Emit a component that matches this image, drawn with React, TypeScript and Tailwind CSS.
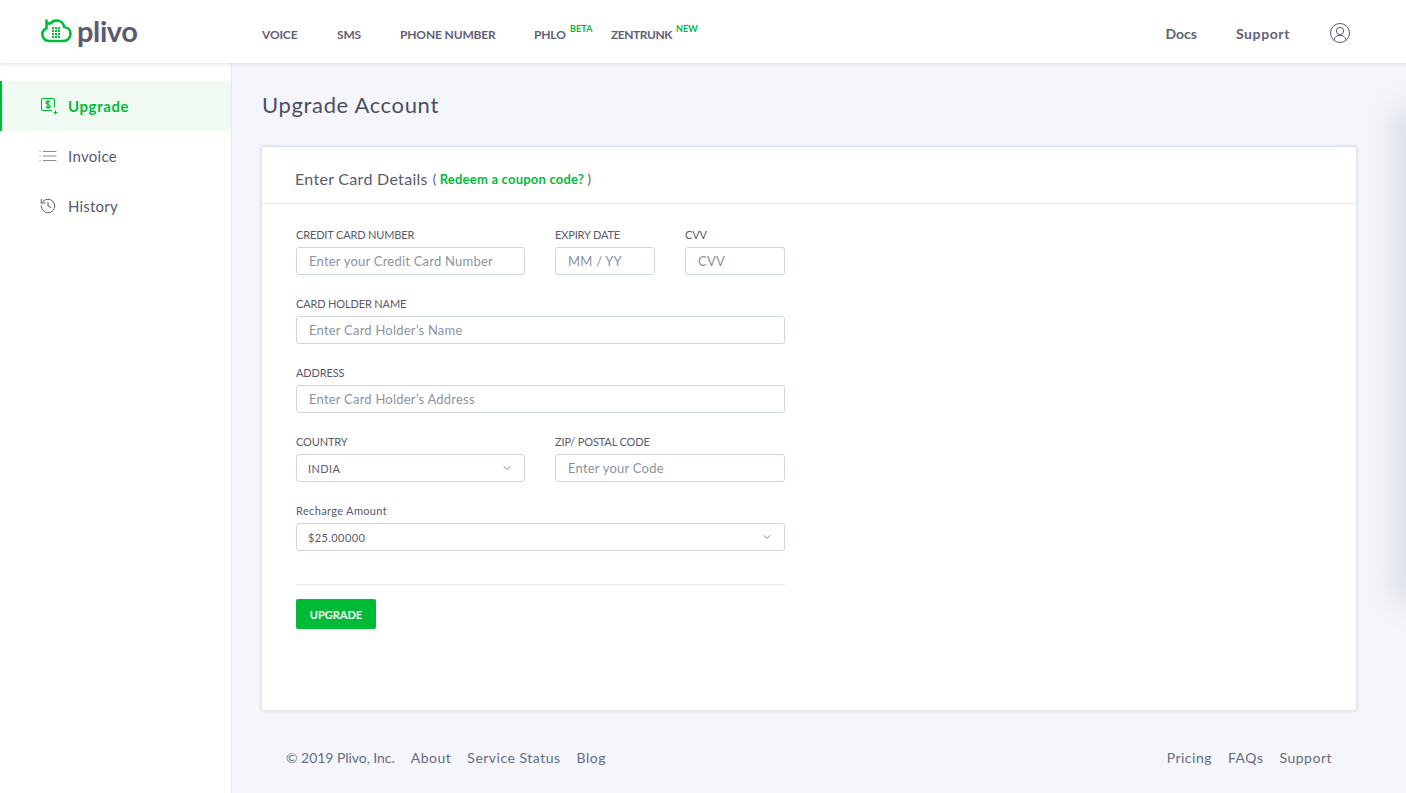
import { ChevronDown, History } from "lucide-react";

const font = "font-['Lato','Liberation_Sans',sans-serif]";
const green = "#00bb38";
const labelCls = "block h-[19px] text-[11px] leading-[14px] text-[#585a6e]";
const inputCls =
  "block h-[28px] w-full rounded-[3px] border border-[#cfd6de] bg-white px-3 text-[13px] tracking-[0.22px] text-[#585a6e] placeholder:text-[#8d939e] outline-none";

const Field = ({ label, placeholder, className = "" }: { label: string; placeholder: string; className?: string }) => (
  <div className={className}>
    <label className={`${labelCls} tracking-[-0.15px]`}>{label}</label>
    <input className={inputCls} placeholder={placeholder} />
  </div>
);

const SelectField = ({ label, value, labelClass, className = "" }: { label: string; value: string; labelClass: string; className?: string }) => (
  <div className={className}>
    <label className={`${labelCls} ${labelClass}`}>{label}</label>
    <button className="flex h-[28px] w-full items-center justify-between rounded-[3px] border border-[#cfd6de] bg-white pl-[11px] pr-[11px] text-[11px] tracking-[0.4px] text-[#585a6e]">
      <span className="pt-[3px]">{value}</span>
      <ChevronDown className="h-[12px] w-[12px] text-[#585a6e]" strokeWidth={1.5} />
    </button>
  </div>
);

const Logo = () => (
  <svg width="31" height="25" viewBox="0 0 31 25" fill="none">
    <path
      d="M5.500 9V1.500M5.500 4.500h4C11 2.600 13 1.500 15.500 1.500c4 0 7 2.700 7.600 6.500 3.400.3 6.400 2.700 6.400 6.400 0 4.300-3 7.600-7 7.600H8c-3.800 0-6.700-3-6.700-6.700 0-2.800 1.600-5 4.200-5.800"
      stroke={green}
      strokeWidth="2.600"
      strokeLinecap="round"
      strokeLinejoin="round"
    />
    {[8, 11, 14, 17].map((y) =>
      [11, 14, 17].map((x) => <rect key={`${x}-${y}`} x={x} y={y} width="2" height="2" fill={green} />)
    )}
  </svg>
);

const UpgradeIcon = () => (
  <svg width="19" height="19" viewBox="0 0 19 19" fill="none" stroke={green} strokeWidth="1.1">
    <path d="M14.500 10.500V3a1.500 1.500 0 0 0-1.500-1.500H3A1.500 1.500 0 0 0 1.500 3v9A1.500 1.500 0 0 0 3 13.500h9" />
    <path d="M15.500 13.500v4M13.500 15.500h4" />
    <path
      d="M10 5.200C9.500 4.500 8.800 4.200 8 4.200c-1.100 0-2 .6-2 1.600 0 2.200 4.200 1.200 4.200 3.400 0 1-.9 1.600-2.100 1.600-.9 0-1.700-.4-2.200-1.100M8 3v8.800"
      strokeWidth="1.300"
    />
  </svg>
);

const ListIcon = () => (
  <svg width="18" height="12" viewBox="0 0 18 12" fill="none" stroke="#8a8c9b" strokeWidth="1">
    <path d="M4 1.500h13.500M4 6h13.500M4 10.500h13.500" />
    <path d="M.5 1.500h2M.5 6h2M.5 10.500h2" strokeDasharray="1 1" />
  </svg>
);

const UserIcon = () => (
  <svg width="20" height="20" viewBox="0 0 20 20" fill="none" stroke="#585a6e" strokeWidth="1">
    <circle cx="10" cy="10" r="9.500" />
    <circle cx="10" cy="8" r="3.600" />
    <path d="M3.800 17c.8-2.900 3-4.700 6.200-4.700s5.400 1.800 6.200 4.700" />
  </svg>
);

const NavLink = ({ label, badge, badgeClass = "", className = "tracking-[-0.15px]" }: { label: string; badge?: string; badgeClass?: string; className?: string }) => (
  <a className={`relative text-[12px] font-bold text-[#5f6175] ${className}`}>
    {label}
    {badge && (
      <span className={`absolute top-[-5px] text-[9px] font-bold tracking-[0.1px] text-[#00bb38] ${badgeClass}`}>{badge}</span>
    )}
  </a>
);

export default function App() {
  return (
    <div className={`relative flex h-[793px] w-[1406px] flex-col overflow-hidden bg-[#f4f6fb] ${font}`}>
      <header className="relative z-10 flex h-[63px] shrink-0 items-center bg-white pl-[41px] pr-[56px] shadow-[0_1px_4px_rgba(60,64,90,0.16)]">
        <div className="flex w-[221px] items-center">
          <Logo />
          <span className="ml-[5px] mt-[-3px] text-[29px] font-bold leading-none tracking-[-0.4px] text-[#5a5b70]">plivo</span>
        </div>
        <nav className="flex items-center pt-[2px]">
          <div className="w-[75px]"><NavLink label="VOICE" /></div>
          <div className="w-[63px]"><NavLink label="SMS" /></div>
          <div className="w-[134px]"><NavLink label="PHONE NUMBER" /></div>
          <div className="w-[77px]"><NavLink label="PHLO" badge="BETA" badgeClass="left-[36px]" /></div>
          <div><NavLink label="ZENTRUNK" badge="NEW" badgeClass="left-[65px]" className="tracking-[-0.45px]" /></div>
        </nav>
        <div className="ml-auto flex items-center pt-[2px]">
          <a className="pt-[2px] text-[14px] font-bold text-[#5f6175]">Docs</a>
          <a className="ml-[39px] pt-[2px] text-[14px] font-bold tracking-[0.6px] text-[#5f6175]">Support</a>
          <a className="ml-[40px]"><UserIcon /></a>
        </div>
      </header>

      <div className="flex min-h-0 flex-1">
        <aside className="w-[232px] shrink-0 border-r border-[#e6e9f0] bg-white pt-[18px]">
          <a className="flex h-[50px] items-center border-l-2 border-[#00bb38] bg-[#f0faf3] pl-[38px] text-[15px] font-bold tracking-[0.6px] text-[#00bb38]">
            <span className="flex w-[28px]"><UpgradeIcon /></span>
            Upgrade
          </a>
          <a className="flex h-[50px] items-center pl-[39px] text-[15px] tracking-[0.3px] text-[#585a6e]">
            <span className="flex w-[29px]"><ListIcon /></span>
            Invoice
          </a>
          <a className="flex h-[50px] items-center pl-[39px] text-[15px] tracking-[0.2px] text-[#585a6e]">
            <span className="flex w-[29px]"><History className="h-[18px] w-[18px] text-[#585a6e]" strokeWidth={1.3} /></span>
            History
          </a>
        </aside>

        <main className="flex min-w-0 flex-1 flex-col pl-[29px] pr-[49px]">
          <h1 className="ml-[1px] mt-[28px] h-[55px] text-[22px] leading-[28px] tracking-[0.65px] text-[#4c4e62]">Upgrade Account</h1>

          <section className="h-[565px] rounded-[3px] border border-[#dfe4ea] bg-white shadow-[0_0_3px_rgba(120,140,160,0.3)]">
            <div className="flex h-[57px] items-center border-b border-[#e6e9f0] pl-[33px] pt-[7px] text-[#585a6e]">
              <h2 className="text-[16px] tracking-[0.3px]">Enter Card Details</h2>
              <span className="ml-[5px] pt-[3px] text-[13px]">
                ( <a className="font-bold tracking-[0.22px] text-[#00bb38]">Redeem a coupon code?</a> )
              </span>
            </div>

            <form className="w-[523px] pl-[34px] pt-[24px]">
              <div className="flex gap-[30px]">
                <Field className="w-[229px]" label="CREDIT CARD NUMBER" placeholder="Enter your Credit Card Number" />
                <Field className="w-[100px]" label="EXPIRY DATE" placeholder="MM / YY" />
                <Field className="w-[100px]" label="CVV" placeholder="CVV" />
              </div>
              <Field className="mt-[22px]" label="CARD HOLDER NAME" placeholder="Enter Card Holder’s Name" />
              <Field className="mt-[22px]" label="ADDRESS" placeholder="Enter Card Holder’s Address" />
              <div className="mt-[22px] flex gap-[30px]">
                <SelectField className="w-[229px]" label="COUNTRY" labelClass="tracking-[-0.15px]" value="INDIA" />
                <Field className="w-[230px]" label="ZIP/ POSTAL CODE" placeholder="Enter your Code" />
              </div>
              <SelectField className="mt-[22px]" label="Recharge Amount" labelClass="tracking-[0.35px]" value="$25.00000" />
              <div className="mt-[33px] border-t border-[#e6e9f0] pt-[14px]">
                <button type="button" className="h-[30px] w-[80px] rounded-[2px] bg-[#00bb38] pt-[2px] text-[11px] font-bold text-white">
                  UPGRADE
                </button>
              </div>
            </form>
          </section>

          <footer className="flex items-center justify-between pl-[25px] pr-[25px] pt-[36px] text-[14px] tracking-[0.5px] text-[#686b7d]">
            <div className="flex gap-[16px]">
              <span className="tracking-[-0.05px]">© 2019 Plivo, Inc.</span>
              <a>About</a>
              <a>Service Status</a>
              <a>Blog</a>
            </div>
            <div className="flex gap-[16px]">
              <a>Pricing</a>
              <a>FAQs</a>
              <a>Support</a>
            </div>
          </footer>
        </main>
      </div>

      {/* off-canvas drawer, only its shadow shows */}
      <div className="absolute left-[1406px] top-[120px] h-[470px] w-[200px] shadow-[0_0_28px_12px_rgba(90,95,110,0.16)]" />
    </div>
  );
}
